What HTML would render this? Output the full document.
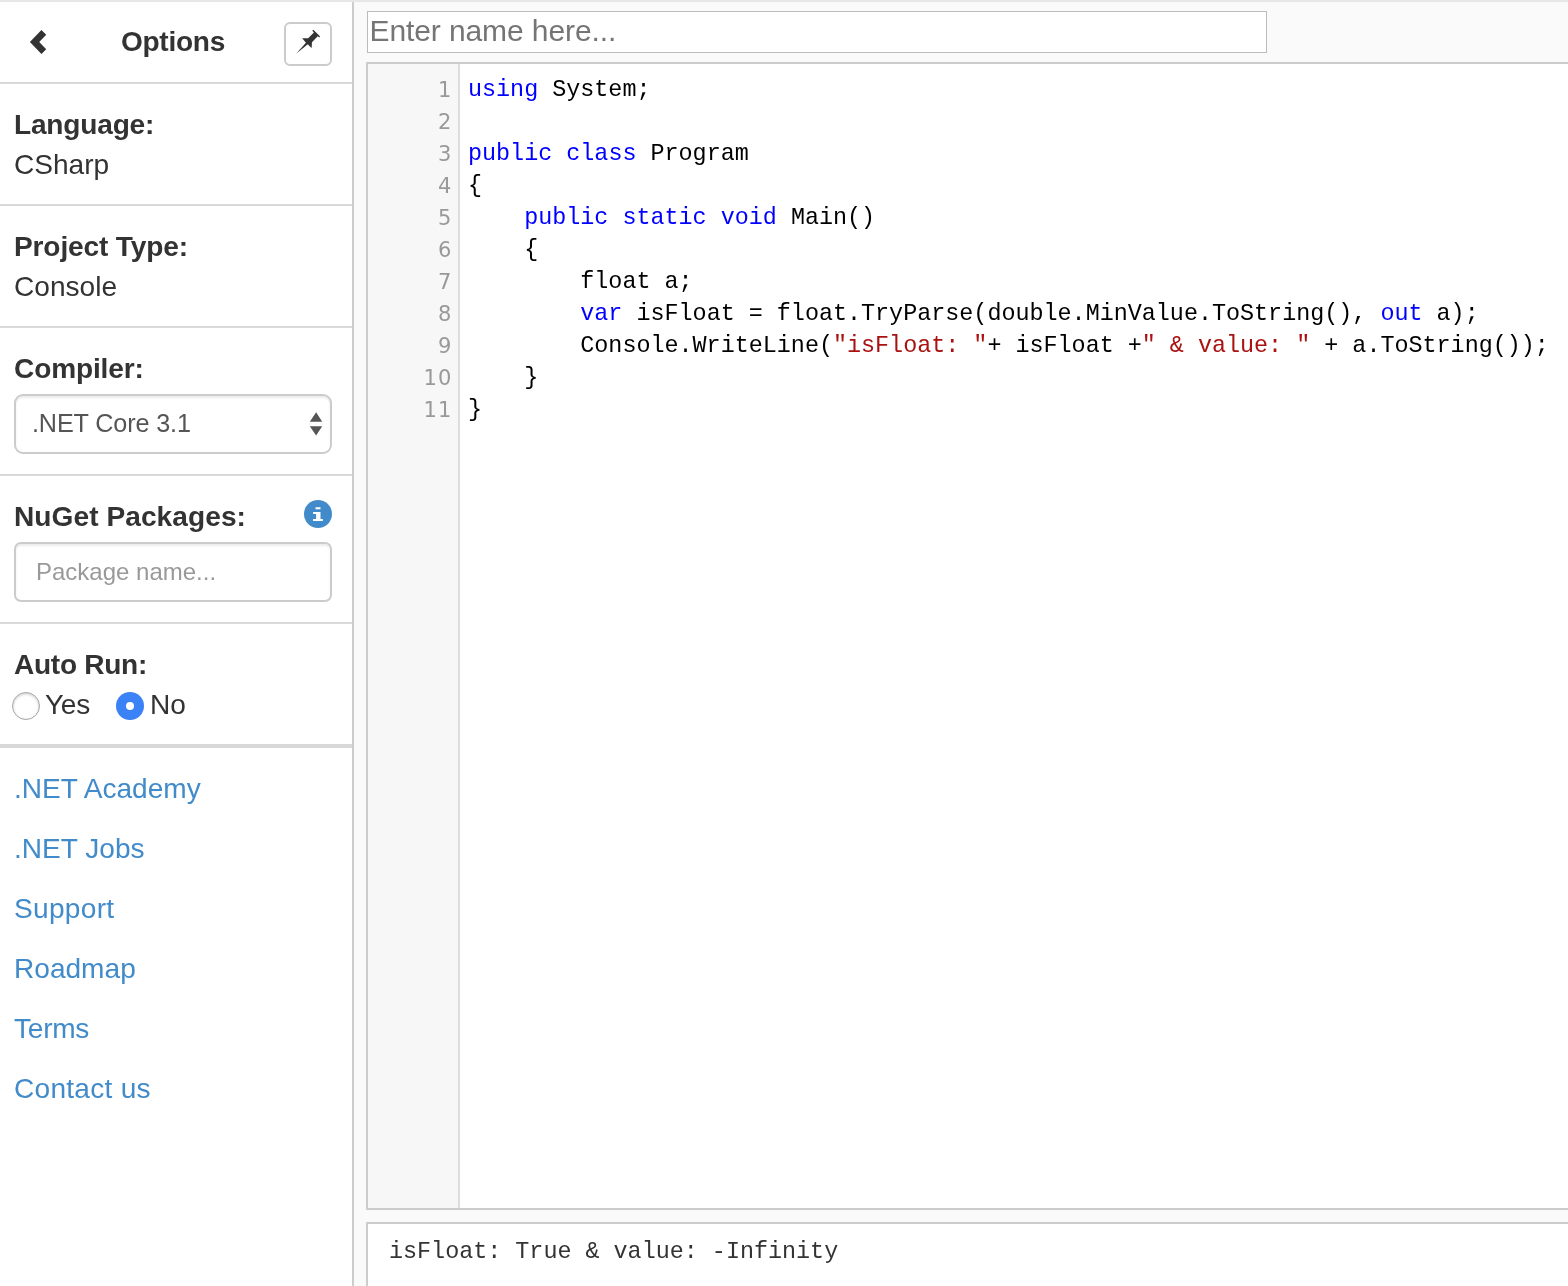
<!DOCTYPE html>
<html lang="en">
<head>
<meta charset="utf-8">
<title>C# Online Compiler | .NET Fiddle</title>
<style>
*{box-sizing:border-box;margin:0;padding:0}
html,body{width:1568px;height:1286px;overflow:hidden;background:#fafafa}
body{position:relative;font-family:"Liberation Sans",Arial,sans-serif;color:#333;font-size:28.08px}
#topband{position:absolute;left:0;top:0;width:1568px;height:2px;background:#e7e7e7}
#sidebar{position:absolute;left:0;top:2px;width:354px;height:1284px;background:#fff;border-right:2px solid #ccc}
.hr{position:absolute;left:0;width:352px;height:2px;background:#d9d9d9}
.lbl{position:absolute;left:14px;font-weight:bold;font-size:28.08px;line-height:36px;white-space:nowrap;color:#333}
.val{position:absolute;left:14px;font-size:28.08px;line-height:36px;white-space:nowrap;color:#333}
.lnk{position:absolute;left:14px;font-size:28.08px;line-height:36px;white-space:nowrap;color:#428bca;text-decoration:none}
#title{letter-spacing:-0.28px;position:absolute;left:0;width:346px;top:22px;text-align:center;font-weight:bold;font-size:28.08px;line-height:36px}
#pinbtn{position:absolute;left:284px;top:20px;width:48px;height:44px;border:2px solid #ccc;border-radius:6px;background:#fff}
#select{position:absolute;left:14px;top:392px;width:318px;height:60px;box-shadow:inset 0 2px 2px rgba(0,0,0,.075);border:2px solid #ccc;border-radius:9px;background:#fff}
#select span{position:absolute;left:16px;top:9px;letter-spacing:-0.13px;font-size:25.2px;line-height:36px;color:#555}
#pkg{position:absolute;left:14px;top:540px;width:318px;height:60px;border:2px solid #ccc;border-radius:7px;background:#fff;box-shadow:inset 0 2px 2px rgba(0,0,0,.075)}
#pkg span{position:absolute;left:20px;top:10px;font-size:24px;line-height:36px;color:#999}
#sidebar,#name,#editor,#output{will-change:transform}
.radio{position:absolute;width:28px;height:28px;border-radius:50%}
#name{position:absolute;left:367px;top:11px;width:900px;height:42px;border:1px solid #bbb;background:#fff}
#name span{position:absolute;left:1.5px;top:0px;letter-spacing:-0.1px;font-size:30px;line-height:38px;color:#757575;white-space:nowrap}
#editor{position:absolute;left:366px;top:62px;width:1300px;height:1148px;border:2px solid #ccc;background:#fff}
#gutter{position:absolute;left:0;top:0;width:92px;height:1144px;background:#f7f7f7;border-right:2px solid #ddd}
.ln{position:absolute;left:0;width:84.4px;margin-top:0px;text-align:right;font-family:"DejaVu Sans","Liberation Sans",sans-serif;font-size:21px;letter-spacing:1.04px;line-height:32px;color:#999}
.cl{position:absolute;left:100px;font-family:"Liberation Mono","Courier New",monospace;font-size:23.4px;line-height:32px;white-space:pre;color:#000}
.k{color:#00f}.s{color:#a11}
#output{position:absolute;left:366px;top:1222px;width:1300px;height:100px;border:2px solid #ccc;background:#fff}
#output pre{position:absolute;left:21px;top:12px;font-family:"Liberation Mono","Courier New",monospace;font-size:23.4px;line-height:32px;color:#333}
</style>
</head>
<body>
<div id="topband"></div>
<div id="sidebar">
  <svg id="back" style="position:absolute;left:0;top:-2px" width="90" height="80" viewBox="0 0 90 80"><path d="M41.45 29.9 L46.2 34.7 L39.25 42.05 L46.2 49.25 L41.45 54 L29.9 42.05 Z" fill="#333"/></svg>
  <div id="title">Options</div>
  <div id="pinbtn"></div>
  <svg id="pin" style="position:absolute;left:276px;top:10px" width="64" height="60" viewBox="0 0 1372 1286"><path d="M430 895 L642 658 Q600 610 560 565 L690 565 L812 440 L778 402 L800 383 L942 518 L928 548 L895 522 L770 650 L765 770 Q720 735 682 692 Z" fill="#333"/></svg>
  <div class="hr" style="top:80px"></div>
  <div class="lbl" style="top:105px;letter-spacing:-0.2px">Language:</div>
  <div class="val" style="top:145px">CSharp</div>
  <div class="hr" style="top:202px"></div>
  <div class="lbl" style="top:227px;letter-spacing:-0.14px">Project Type:</div>
  <div class="val" style="top:267px">Console</div>
  <div class="hr" style="top:324px"></div>
  <div class="lbl" style="top:349px;letter-spacing:-0.15px">Compiler:</div>
  <div id="select"><span>.NET Core 3.1</span></div>
  <svg style="position:absolute;left:300px;top:400px" width="40" height="50" viewBox="300 402 40 50"><path d="M316.15 412.3 L322.2 421.8 L309.8 421.8 Z M309.8 426.2 L322.2 426.2 L316.15 435.6 Z" fill="#555"/></svg>
  <div class="hr" style="top:472px"></div>
  <div class="lbl" style="top:497px;letter-spacing:0.07px">NuGet Packages:</div>
  <svg style="position:absolute;left:300px;top:494px" width="40" height="40" viewBox="300 496 40 40"><circle cx="318" cy="514" r="14" fill="#428bca"/><path d="M315.5 507.2h5v2h-5z M313.1 512h7.4v7h2.4v2.1h-9.9v-2.1h3.1v-4.9h-3z" fill="#fff"/></svg>
  <div id="pkg"><span>Package name...</span></div>
  <div class="hr" style="top:620px"></div>
  <div class="lbl" style="top:645px;letter-spacing:-0.3px">Auto Run:</div>
  <div class="radio" style="left:12px;top:690px;background:#fff;border:1.5px solid #a6a6a6;box-shadow:inset 0 1px 3px rgba(0,0,0,.22)"></div>
  <div class="radio" style="left:116px;top:690px;background:#3b82f7"></div>
  <div class="radio" style="left:126px;top:700px;width:8px;height:8px;background:#fff"></div>
  <div class="val" style="top:685px;left:45px;letter-spacing:-0.3px">Yes</div>
  <div class="val" style="top:685px;left:150px">No</div>
  <div class="hr" style="top:742px;height:4px"></div>
  <a class="lnk" style="top:769px">.NET Academy</a>
  <a class="lnk" style="top:829px">.NET Jobs</a>
  <a class="lnk" style="top:889px;letter-spacing:0.3px">Support</a>
  <a class="lnk" style="top:949px">Roadmap</a>
  <a class="lnk" style="top:1009px;letter-spacing:-0.26px">Terms</a>
  <a class="lnk" style="top:1069px;letter-spacing:0.26px">Contact us</a>
</div>
<div id="name"><span>Enter name here...</span></div>
<div id="editor">
  <div id="gutter">
    <div class="ln" style="top:10px">1</div>
    <div class="ln" style="top:42px">2</div>
    <div class="ln" style="top:74px">3</div>
    <div class="ln" style="top:106px">4</div>
    <div class="ln" style="top:138px">5</div>
    <div class="ln" style="top:170px">6</div>
    <div class="ln" style="top:202px">7</div>
    <div class="ln" style="top:234px">8</div>
    <div class="ln" style="top:266px">9</div>
    <div class="ln" style="top:298px">10</div>
    <div class="ln" style="top:330px">11</div>
  </div>
  <div class="cl" style="top:10px"><span class="k">using</span> System;</div>
  <div class="cl" style="top:74px"><span class="k">public</span> <span class="k">class</span> Program</div>
  <div class="cl" style="top:106px">{</div>
  <div class="cl" style="top:138px">    <span class="k">public</span> <span class="k">static</span> <span class="k">void</span> Main()</div>
  <div class="cl" style="top:170px">    {</div>
  <div class="cl" style="top:202px">        float a;</div>
  <div class="cl" style="top:234px">        <span class="k">var</span> isFloat = float.TryParse(double.MinValue.ToString(), <span class="k">out</span> a);</div>
  <div class="cl" style="top:266px">        Console.WriteLine(<span class="s">"isFloat: "</span>+ isFloat +<span class="s">" &amp; value: "</span> + a.ToString());</div>
  <div class="cl" style="top:298px">    }</div>
  <div class="cl" style="top:330px">}</div>
</div>
<div id="output"><pre>isFloat: True &amp; value: -Infinity</pre></div>
</body>
</html>
